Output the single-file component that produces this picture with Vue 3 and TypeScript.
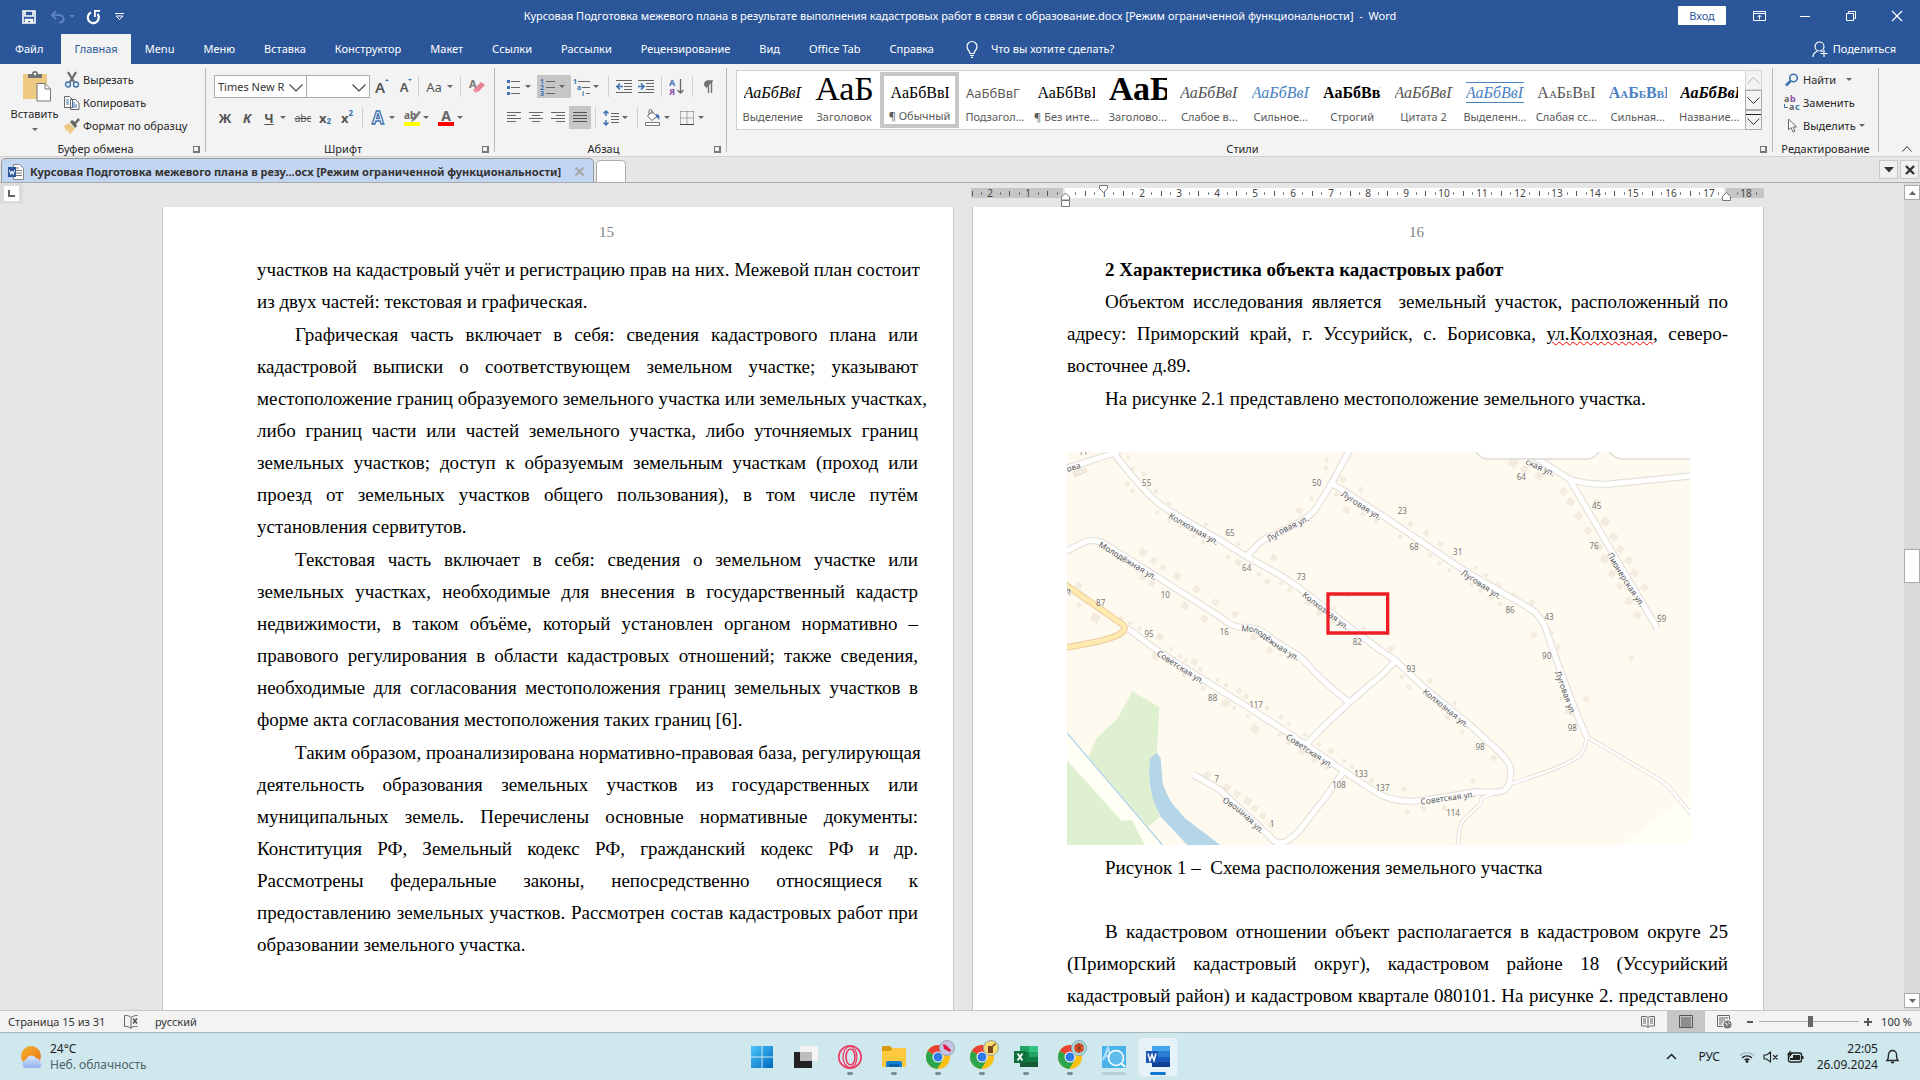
<script setup lang="ts">
interface Para { lines: string[]; flush?: boolean }
interface StyleItem { sample: string; name: string; kind: string; selected?: boolean }

const title = 'Курсовая Подготовка межевого плана в результате выполнения кадастровых работ в связи с образование.docx [Режим ограниченной функциональности]  -  Word'
const tabs = ['Файл', 'Главная', 'Menu', 'Меню', 'Вставка', 'Конструктор', 'Макет', 'Ссылки', 'Рассылки', 'Рецензирование', 'Вид', 'Office Tab', 'Справка']

const styleItems: StyleItem[] = [
  { sample: 'АаБбВвГ', name: 'Выделение', kind: 'italic' },
  { sample: 'АаБ', name: 'Заголовок', kind: 'huge' },
  { sample: 'АаБбВвГ', name: '¶ Обычный', kind: 'normal', selected: true },
  { sample: 'АаБбВвГ', name: 'Подзагол...', kind: 'subtitle' },
  { sample: 'АаБбВвГ', name: '¶ Без инте...', kind: 'normal' },
  { sample: 'АаБ', name: 'Заголово...', kind: 'huge heavy' },
  { sample: 'АаБбВвГ', name: 'Слабое в...', kind: 'italic grey' },
  { sample: 'АаБбВвГ', name: 'Сильное...', kind: 'italic azure' },
  { sample: 'АаБбВвГ', name: 'Строгий', kind: 'heavy' },
  { sample: 'АаБбВвГ', name: 'Цитата 2', kind: 'italic grey' },
  { sample: 'АаБбВвГ', name: 'Выделенн...', kind: 'italic azure ruled' },
  { sample: 'АаБбВвГ', name: 'Слабая сс...', kind: 'caps grey' },
  { sample: 'АаБбВвГ', name: 'Сильная...', kind: 'caps azure heavy' },
  { sample: 'АаБбВвГ', name: 'Название...', kind: 'italic heavy' },
]

const leftParas: Para[] = [
  { flush: true, lines: ['участков на кадастровый учёт и регистрацию прав на них. Межевой план состоит', 'из двух частей: текстовая и графическая.'] },
  { lines: [
    'Графическая часть включает в себя: сведения кадастрового плана или',
    'кадастровой выписки о соответствующем земельном участке; указывают',
    'местоположение границ образуемого земельного участка или земельных участках,',
    'либо границ части или частей земельного участка, либо уточняемых границ',
    'земельных участков; доступ к образуемым земельным участкам (проход или',
    'проезд от земельных участков общего пользования), в том числе путём',
    'установления сервитутов.'] },
  { lines: [
    'Текстовая часть включает в себя: сведения о земельном участке или',
    'земельных участках, необходимые для внесения в государственный кадастр',
    'недвижимости, в таком объёме, который установлен органом нормативно –',
    'правового регулирования в области кадастровых отношений; также сведения,',
    'необходимые для согласования местоположения границ земельных участков в',
    'форме акта согласования местоположения таких границ [6].'] },
  { lines: [
    'Таким образом, проанализирована нормативно-правовая база, регулирующая',
    'деятельность образования земельных участков из государственных или',
    'муниципальных земель. Перечислены основные нормативные документы:',
    'Конституция РФ, Земельный кодекс РФ, гражданский кодекс РФ и др.',
    'Рассмотрены федеральные законы, непосредственно относящиеся к',
    'предоставлению земельных участков. Рассмотрен состав кадастровых работ при',
    'образовании земельного участка.'] },
]

const closing = [
  'В кадастровом отношении объект располагается в кадастровом округе 25',
  '(Приморский кадастровый округ), кадастровом районе 18 (Уссурийский',
  'кадастровый район) и кадастровом квартале 080101. На рисунке 2. представлено',
]

/* Horizontal ruler: one centimetre is 37.8 px, zero sits 95 px from the page edge */
const CM = 37.8
const rulerNumbers = [-2, -1, ...Array.from({ length: 18 }, (_, i) => i + 1)].map(n => ({
  x: Math.round(95 + n * CM), label: String(Math.abs(n)),
}))
const rulerTicks: { x: number; h: number }[] = []
for (let q = -10; q <= 74; q++) {
  if (q % 4 === 0 || q === 70) continue
  const x = Math.round(95 + (q * CM) / 4)
  rulerTicks.push({ x, h: q % 2 === 0 ? 5 : 2 })
}

/* Map: street axes, house numbers and street names */
const streets = [
  'M20 85 L160 40 L180 30',
  'M155 30 C200 90 250 150 290 185 C320 212 340 218 480 300 L560 350 L660 405 L720 445 L880 570 L960 630 L1005 660 L1095 745 L1230 855 C1310 930 1352 960 1352 990 C1354 1050 1330 1057 1300 1057 L1250 1055 L1080 1082 C1020 1088 970 1075 930 1045 L850 992 L740 915 L570 805 L435 722 L290 630 L198 562',
  'M10 338 L75 305 Q110 295 140 315 L480 530 Q520 565 550 562 Q600 560 640 600 L720 650 C760 690 780 720 865 785',
  'M740 912 L790 860 L865 790 L940 725 Q980 695 1005 662',
  'M868 30 L815 130 L765 210 C740 240 700 255 640 285 C600 300 590 320 560 348',
  'M815 130 L965 225 L1210 390 L1400 500 C1430 515 1440 530 1455 560 L1500 690 L1550 820 L1580 890',
  'M1390 30 L1530 118 Q1580 135 1650 132 L1900 107',
  'M1530 120 L1650 325 L1792 565',
  'M398 1002 L480 1050 L630 1190 Q655 1222 685 1200 C720 1180 740 1140 790 1080 L850 995',
]
const lanes = [
  'M1580 890 Q1575 930 1560 945 C1520 980 1440 1000 1345 1035',
  'M1580 890 L1800 1020 Q1830 1040 1850 1070 L1900 1130',
  'M1300 1060 L1265 1075 L1262 1090 L1215 1135 Q1200 1150 1198 1170 L1192 1230',
]
const houseNumbers: [number, number, string][] = [
  [70, 38, '11'], [260, 129, '55'], [770, 129, '50'], [510, 280, '65'], [560, 384, '64'], [724, 411, '73'], [316, 465, '10'],
  [493, 578, '16'], [122, 489, '87'], [267, 582, '95'], [892, 607, '82'], [458, 776, '88'], [588, 796, '117'], [903, 1002, '133'],
  [837, 1037, '108'], [470, 1018, '7'], [637, 1152, '1'], [1384, 111, '64'], [1610, 198, '45'], [1602, 318, '76'], [1027, 214, '23'],
  [1062, 323, '68'], [1193, 336, '31'], [1350, 512, '86'], [1467, 531, '43'], [1460, 648, '90'], [1053, 688, '93'], [1537, 866, '98'],
  [1260, 921, '98'], [968, 1044, '137'], [1179, 1119, '114'], [1805, 537, '59'],
]
const streetNames: [string, string][] = [
  ['M8 92 L90 68', 'кова'],
  ['M328 226 L520 335', 'Колхозная ул.'],
  ['M118 312 L340 446', 'Молодёжная ул.'],
  ['M624 300 Q660 272 700 256 Q730 245 790 205', 'Луговая ул.'],
  ['M846 160 L1010 266', 'Луговая ул.'],
  ['M730 462 L900 592', 'Колхозная ул.'],
  ['M544 566 L580 568 Q600 574 640 610 L760 684', 'Молодёжная ул.'],
  ['M292 638 L480 758', 'Советская ул.'],
  ['M680 888 L860 1008', 'Советская ул.'],
  ['M490 1078 L540 1110 L660 1228', 'Овощная ул.'],
  ['M10 442 L90 500', 'ул.'],
  ['M1398 64 L1530 124', 'ская ул.'],
  ['M1648 340 Q1690 420 1780 540', 'Пионерская ул.'],
  ['M1206 396 L1370 504', 'Луговая ул.'],
  ['M1492 694 L1560 880', 'Луговая ул.'],
  ['M1092 752 L1270 896', 'Колхозная ул.'],
  ['M1082 1086 L1280 1058', 'Советская ул.'],
]
const houses: [number, number, number][] = [
  [205, 52, 9], [218, 86, 9], [252, 101, 12], [202, 132, 12], [218, 153, 9], [288, 154, 9], [327, 190, 10], [291, 217, 9], [328, 242, 9],
  [362, 258, 9], [438, 253, 9], [400, 288, 9], [429, 307, 10], [535, 311, 10], [504, 350, 10], [535, 367, 16], [641, 353, 16], [597, 403, 10],
  [622, 425, 12], [662, 430, 9], [688, 450, 12], [744, 488, 14], [778, 518, 14], [249, 338, 18], [281, 362, 15], [309, 381, 13], [247, 412, 14],
  [276, 431, 14], [351, 408, 16], [409, 447, 16], [375, 498, 18], [467, 487, 16], [433, 537, 16], [525, 523, 16], [581, 592, 16], [628, 631, 16],
  [57, 436, 15], [57, 495, 10], [106, 534, 22], [184, 534, 10], [211, 549, 9], [239, 565, 10], [299, 591, 18], [287, 648, 20], [334, 627, 9],
  [362, 649, 9], [403, 666, 15], [371, 705, 10], [378, 660, 9], [421, 688, 9], [473, 719, 9], [498, 735, 9], [429, 745, 10], [538, 753, 13],
  [558, 769, 13], [497, 790, 18], [523, 804, 9], [564, 828, 9], [622, 804, 9], [662, 831, 10], [585, 866, 20], [686, 852, 9], [735, 884, 10],
  [659, 885, 9], [686, 908, 12], [726, 936, 14], [777, 914, 9], [762, 962, 10], [813, 933, 14], [800, 986, 9], [852, 962, 9], [877, 980, 10],
  [935, 1022, 12], [442, 1005, 16], [500, 1042, 18], [530, 1062, 15], [563, 1083, 20], [584, 1105, 15], [609, 1126, 15], [632, 1155, 14],
  [800, 60, 10], [798, 83, 10], [848, 119, 14], [830, 164, 9], [860, 210, 16], [902, 148, 11], [718, 211, 16], [755, 176, 10], [908, 223, 10],
  [947, 243, 10], [910, 565, 9], [862, 466, 8], [824, 503, 8], [818, 545, 9], [1360, 68, 22], [1393, 87, 18], [1438, 108, 20], [1511, 154, 18],
  [1532, 186, 18], [1556, 228, 18], [1583, 273, 18], [1609, 190, 18], [1635, 245, 20], [1661, 290, 18], [1681, 328, 18], [1617, 320, 18],
  [1634, 357, 20], [1657, 401, 18], [1706, 361, 18], [1723, 399, 18], [1680, 438, 16], [1753, 442, 18], [1707, 484, 18], [1732, 525, 18],
  [1804, 530, 16], [1714, 655, 12], [1051, 253, 12], [1099, 278, 13], [1142, 312, 13], [1020, 290, 9], [1110, 347, 10], [1139, 370, 10],
  [1168, 391, 9], [1246, 384, 9], [1278, 406, 9], [1234, 434, 10], [1262, 453, 9], [1293, 474, 10], [1319, 492, 9], [1316, 435, 12],
  [1360, 466, 12], [1415, 488, 14], [1421, 586, 14], [1472, 579, 13], [1494, 622, 12], [1505, 775, 10], [1521, 816, 11], [1579, 778, 14],
  [992, 625, 14], [1025, 710, 10], [1047, 742, 11], [1110, 724, 12], [1163, 829, 14], [1207, 877, 9], [1301, 954, 14], [1239, 1023, 12],
  [1032, 1047, 12], [1042, 1115, 12], [1089, 1107, 10], [1153, 1104, 12], [1184, 790, 9],
]
</script>

<template>
  <div class="app">
    <header class="band">
      <div class="titlebar">
        <div class="qat">
          <button class="q" aria-label="Сохранить"><svg width="14" height="14" viewBox="0 0 14 14"><path d="M1 1h12v12h-12zM3 1v5h8V1M3.500 13V9.500h7V13" fill="none" stroke="#fff" stroke-width="1.6" /><path d="M4 9h6v4H8v-2H6v2H4z" fill="#fff" /></svg></button>
          <button class="q wide" aria-label="Отменить"><svg width="26" height="14" viewBox="0 0 26 14"><path d="M2 5h7c3 0 4.500 2 4.500 4S12 12.500 9 12.500M6 1L2 5l4 4" fill="none" stroke="#5c82bd" stroke-width="2" /><path d="M19 5h6l-3 3z" fill="#5c82bd" /></svg></button>
          <button class="q" aria-label="Повторить"><svg width="15" height="15" viewBox="0 0 15 15"><path d="M5 2.500A5.500 5.500 0 1 0 11.500 4" fill="none" stroke="#fff" stroke-width="2.2" /><path d="M8 0h6v1.800h-4.200V7H8z" fill="#fff" /></svg></button>
          <button class="q" aria-label="Настройка"><svg width="9" height="8" viewBox="0 0 9 8"><path d="M0 .5h9M1 3l3.500 3.500L8 3z" fill="none" stroke="#fff" /></svg></button>
        </div>
        <div class="doc-title">{{ title }}</div>
        <div class="winbtns">
          <button class="signin">Вход</button>
          <button aria-label="Параметры ленты"><svg width="13" height="10" viewBox="0 0 13 10"><path d="M.5.5h12v9H.5zM.5 2.500h12M6.500 8.500V4.500M4.500 6l2-2 2 2" fill="none" stroke="#fff" /></svg></button>
          <button aria-label="Свернуть"><svg width="10" height="10" viewBox="0 0 10 10"><path d="M0 5.500h10" stroke="#fff" /></svg></button>
          <button aria-label="Восстановить"><svg width="10" height="10" viewBox="0 0 10 10"><path d="M.5 2.500h7v7h-7zM2.500 2.500v-2h7v7h-2" fill="none" stroke="#fff" /></svg></button>
          <button aria-label="Закрыть"><svg width="10" height="10" viewBox="0 0 10 10"><path d="M0 0l10 10M10 0L0 10" stroke="#fff" stroke-width="1.2" /></svg></button>
        </div>
      </div>
      <nav class="tabs">
        <button v-for="t in tabs" :key="t" class="tab" :class="{ active: t === 'Главная', file: t === 'Файл' }">{{ t }}</button>
        <button class="tellme"><svg width="12" height="17" viewBox="0 0 12 17"><path d="M4 12.500C4 10 1 9 1 5.500a5 5 0 0 1 10 0C11 9 8 10 8 12.500zM4 14.500h4M5 16.300h2" fill="none" stroke="#fff" stroke-width="1.2" /></svg>Что вы хотите сделать?</button>
        <button class="share"><svg width="16" height="17" viewBox="0 0 16 17"><circle cx="7.500" cy="5.500" r="4.500" fill="none" stroke="#fff" stroke-width="1.200" /><path d="M1 16c0-3 2-5 4.500-6M9 9.700l1.500 1M12 9v7M8.500 12.500h7" fill="none" stroke="#fff" stroke-width="1.200" /></svg>Поделиться</button>
      </nav>
    </header>

    <section class="ribbon">
      <div class="group clip">
        <div class="clip-body">
          <button class="paste">
            <svg width="30" height="31" viewBox="0 0 30 31"><path d="M1 3h24v25H1z" fill="#eec981" /><path d="M6 7V3h4a3 3 0 0 1 6 0h4v4z" fill="#737373" /><circle cx="13" cy="3" r="1.200" fill="#fff" /><path d="M15 12.500h8l5.500 5.500v12H15z" fill="#fff" stroke="#777" /><path d="M23 12.500V18h5.500" fill="none" stroke="#777" /></svg>
            <span>Вставить</span><i class="caret"></i>
          </button>
          <div class="cmds">
            <button><svg width="16" height="16" viewBox="0 0 16 16"><path d="M4 0l6 10M12 0L6 10" stroke="#6a6a6a" stroke-width="2.200" /><circle cx="4" cy="12.500" r="2.500" fill="none" stroke="#3f74b0" stroke-width="1.400" /><circle cx="12" cy="12.500" r="2.500" fill="none" stroke="#3f74b0" stroke-width="1.400" /></svg>Вырезать</button>
            <button><svg width="16" height="16" viewBox="0 0 16 16"><path d="M.5 1.500h5l3 3v8h-8zM6.500 4.500h5l3.500 3.500v6.500H6.500z" fill="#fff" stroke="#666" /><path d="M2 5h3M2 7h3M2 9h3M8 8h3M8 10h5M8 12h5" stroke="#3f74b0" /></svg>Копировать</button>
            <button><svg width="16" height="16" viewBox="0 0 16 16"><path d="M0 8l5-3 6 6-5 5-2-2 1-2-3 1z" fill="#eec981" /><path d="M6 4l2-2 3 2 3-4 2 2-4 4 1 2-2 2z" fill="#666" /></svg>Формат по образцу</button>
          </div>
        </div>
        <div class="glabel">Буфер обмена<i class="launch"></i></div>
      </div>

      <div class="group font">
        <div class="row">
          <label class="combo face"><select aria-label="Шрифт"><option>Times New R</option></select><svg width="14" height="8" viewBox="0 0 14 8"><path d="M.5.5L7 7 13.500.5" fill="none" stroke="#444" stroke-width="1.200" /></svg></label>
          <label class="combo size"><select aria-label="Размер шрифта"><option></option></select><svg width="14" height="8" viewBox="0 0 14 8"><path d="M.5.5L7 7 13.500.5" fill="none" stroke="#444" stroke-width="1.200" /></svg></label>
          <button class="b24 grow">А<i class="up"></i></button>
          <button class="b24 shrink">А<i class="down"></i></button>
          <i class="sep tight"></i>
          <button class="aa">Aa<i class="caret"></i></button>
          <i class="sep tight"></i>
          <button class="b32" aria-label="Очистить форматирование"><svg width="15" height="15" viewBox="0 0 15 15"><text x="-1" y="9" font-size="11" font-weight="700" fill="#777">A</text><path d="M4 10l7-7 4 3-7 7zM3 11l3 3 1-1-3-3z" fill="#e78295" /></svg></button>
        </div>
        <div class="row">
          <button class="b heavy">Ж</button>
          <button class="b heavy slant">К</button>
          <button class="b split heavy"><u>Ч</u><i class="caret"></i></button>
          <button class="b small"><s>abc</s></button>
          <button class="b heavy">x<sub>2</sub></button>
          <button class="b heavy">x<sup>2</sup></button>
          <i class="sep"></i>
          <button class="b split" aria-label="Текстовые эффекты"><svg width="22" height="20" viewBox="0 0 22 20"><text x="11" y="16" text-anchor="middle" font-size="17" font-weight="700" fill="#fff" stroke="#3f74b0" stroke-width="1.300">A</text></svg><i class="caret"></i></button>
          <button class="b split" aria-label="Цвет выделения"><svg width="22" height="20" viewBox="0 0 22 20"><text x="3" y="11" font-size="10" font-weight="700" fill="#666">ab</text><path d="M18 3l2 1-6 8-4 2 2-4z" fill="#777" /><path d="M3 14h16v4H3z" fill="#ff0" /></svg><i class="caret"></i></button>
          <button class="b split" aria-label="Цвет текста"><svg width="22" height="20" viewBox="0 0 22 20"><text x="11" y="13" text-anchor="middle" font-size="14" font-weight="700" fill="#666">A</text><path d="M3 14h16v4H3z" fill="#f00" /></svg><i class="caret"></i></button>
        </div>
        <div class="glabel">Шрифт<i class="launch"></i></div>
      </div>

      <div class="group para">
        <div class="row">
          <button class="b split" aria-label="Маркеры"><svg width="16" height="16" viewBox="0 0 16 16"><path d="M5 2.500h9M5 8.500h9M5 14.500h9" stroke="#666" /><path d="M1 1h3v3H1zM1 7h3v3H1zM1 13h3v3H1z" fill="#3f74b0" /></svg><i class="caret"></i></button>
          <button class="b split on" aria-label="Нумерация"><svg width="16" height="18" viewBox="0 0 16 18"><path d="M6 3.500h9M6 9.500h9M6 15.500h9" stroke="#666" /><g font-size="7" font-weight="700" fill="#3f74b0"><text x="0" y="6">1</text><text x="0" y="12">2</text><text x="0" y="18">3</text></g></svg><i class="caret"></i></button>
          <button class="b split" aria-label="Многоуровневый список"><svg width="18" height="18" viewBox="0 0 18 18"><path d="M5 3.500h12M9 9.500h8M13 15.500h4" stroke="#666" /><g font-size="7" font-weight="700" fill="#3f74b0"><text x="0" y="6">1</text><text x="4" y="12">a</text><text x="9" y="18">i</text></g></svg><i class="caret"></i></button>
          <i class="sep first"></i>
          <button class="b" aria-label="Уменьшить отступ"><svg width="16" height="14" viewBox="0 0 16 14"><path d="M0 .5h16M8 3.500h8M8 6.500h8M8 9.500h8M0 12.500h16" stroke="#666" /><path d="M1 6.500h6M4 3.500l-3 3 3 3" fill="none" stroke="#3f74b0" stroke-width="1.700" /></svg></button>
          <button class="b" aria-label="Увеличить отступ"><svg width="16" height="14" viewBox="0 0 16 14"><path d="M0 .5h16M8 3.500h8M8 6.500h8M8 9.500h8M0 12.500h16" stroke="#666" /><path d="M0 6.500h6M3 3.500l3 3-3 3" fill="none" stroke="#3f74b0" stroke-width="1.700" /></svg></button>
          <i class="sep"></i>
          <button class="b" aria-label="Сортировка"><svg width="16" height="18" viewBox="0 0 16 18"><g font-size="9" font-weight="700"><text x="0" y="8" fill="#3f74b0">А</text><text x="0" y="17" fill="#8b4fa8">Я</text></g><path d="M11.500 1v14M8.500 12l3 3 3-3" fill="none" stroke="#666" stroke-width="1.300" /></svg></button>
          <i class="sep"></i>
          <button class="b" aria-label="Все знаки"><svg width="12" height="14" viewBox="0 0 12 14"><path d="M5 7.500A3.500 3.500 0 0 1 5 .8h6" fill="#737373" stroke="#737373" /><path d="M6.500 1v12M9.500 1v12" stroke="#737373" stroke-width="1.400" /></svg></button>
        </div>
        <div class="row">
          <button class="b" aria-label="По левому краю"><svg width="14" height="12" viewBox="0 0 14 12"><path d="M0 .5h14M0 3.500h9M0 6.500h14M0 9.500h9" stroke="#666" /></svg></button>
          <button class="b" aria-label="По центру"><svg width="14" height="12" viewBox="0 0 14 12"><path d="M0 .5h14M3 3.500h8M0 6.500h14M3 9.500h8" stroke="#666" /></svg></button>
          <button class="b" aria-label="По правому краю"><svg width="14" height="12" viewBox="0 0 14 12"><path d="M0 .5h14M5 3.500h9M0 6.500h14M5 9.500h9" stroke="#666" /></svg></button>
          <button class="b on" aria-label="По ширине"><svg width="14" height="12" viewBox="0 0 14 12"><path d="M0 .5h14M0 3.500h14M0 6.500h14M0 9.500h14" stroke="#555" /></svg></button>
          <i class="sep"></i>
          <button class="b split" aria-label="Интервал"><svg width="16" height="16" viewBox="0 0 16 16"><path d="M3 1v5M.5 3.500L3 1l2.500 2.500M3 15v-5M.5 12.500L3 15l2.500-2.500" fill="none" stroke="#3f74b0" stroke-width="1.500" /><path d="M8 3.500h8M8 6.500h8M8 9.500h8M8 12.500h8" stroke="#666" /></svg><i class="caret"></i></button>
          <i class="sep first"></i>
          <button class="b split" aria-label="Заливка"><svg width="18" height="17" viewBox="0 0 18 17"><path d="M8 2.500l5 5-5 4-4.500-4.500zM5 6V2a1.500 1.500 0 0 1 3 0v3" fill="#fff" stroke="#666" /><path d="M12 5c4 0 4 4 3 6-1-2-2-3-3-3z" fill="#3f74b0" /><path d="M1.500 13.500h14v3h-14z" fill="#fff" stroke="#777" /></svg><i class="caret"></i></button>
          <button class="b split" aria-label="Границы"><svg width="14" height="14" viewBox="0 0 14 14"><path d="M.5.5h13M.5.5v13M13.500.5v13M7 .5v13M.5 7h13" stroke="#666" stroke-dasharray="1 1" /><path d="M0 13.500h14" stroke="#444" /></svg><i class="caret"></i></button>
        </div>
        <div class="glabel">Абзац<i class="launch"></i></div>
      </div>

      <div class="group styles">
        <div class="gallery">
          <button v-for="s in styleItems" :key="s.name" class="style" :class="{ selected: s.selected }">
            <span class="sample" :class="s.kind">{{ s.sample }}</span><span class="sname">{{ s.name }}</span>
          </button>
          <div class="gscroll">
            <button class="dim" aria-label="Вверх"><svg width="13" height="7" viewBox="0 0 13 7"><path d="M.5 6.500l6-6 6 6" fill="none" stroke="#b5b5b5" /></svg></button>
            <button aria-label="Вниз"><svg width="13" height="7" viewBox="0 0 13 7"><path d="M.5.5l6 6 6-6" fill="none" stroke="#333" /></svg></button>
            <button aria-label="Ещё"><svg width="15" height="12" viewBox="0 0 15 12"><path d="M0 .5h15" stroke="#222" /><path d="M1.500 4.500l6 6 6-6" fill="none" stroke="#333" /></svg></button>
          </div>
        </div>
        <div class="glabel">Стили<i class="launch"></i></div>
      </div>

      <div class="group edit">
        <div class="cmds">
          <button><svg width="14" height="14" viewBox="0 0 14 14"><circle cx="8.500" cy="5" r="3.800" fill="none" stroke="#3f74b0" stroke-width="1.600" /><path d="M5.500 8L1 12.500" stroke="#3f74b0" stroke-width="2.600" /></svg>Найти<i class="caret far"></i></button>
          <button><svg width="16" height="16" viewBox="0 0 16 16"><g font-size="9" font-weight="700"><text x="0" y="7" fill="#666">a</text><text x="6" y="7" fill="#8b4fa8">b</text><text x="5" y="15" fill="#666">a</text><text x="11" y="15" fill="#3f74b0">c</text></g><path d="M.5 9v3.500h3.500" fill="none" stroke="#3f74b0" /></svg>Заменить</button>
          <button><svg width="12" height="15" viewBox="0 0 12 15"><path d="M2.500 1v11l2.500-2.500 2 4.500 2-1-2-4h3.500z" fill="#fff" stroke="#666" /></svg>Выделить<i class="caret"></i></button>
        </div>
        <div class="glabel">Редактирование</div>
      </div>
      <div class="ribbon-end">
        <button aria-label="Свернуть ленту"><svg width="10" height="6" viewBox="0 0 10 6"><path d="M.5 5.500l4.500-5 4.500 5" fill="none" stroke="#333" /></svg></button>
      </div>
    </section>

    <div class="doctabs">
      <a class="doctab" href="#doc"><svg width="16" height="16" viewBox="0 0 16 16"><path d="M5.500.5h6l4 4v11h-10z" fill="#fff" stroke="#888" /><path d="M8 4h3M8 6.500h6M8 9h6M8 11.500h6" stroke="#777" /><path d="M0 3h8v10H0z" fill="#2b579a" /><path d="M1.500 6l1.200 4.500L4 7l1.300 3.500L6.500 6" fill="none" stroke="#fff" /></svg><b>Курсовая Подготовка межевого плана в резу...осх [Режим ограниченной функциональности]</b><svg width="9" height="9" viewBox="0 0 9 9"><path d="M.5.5l8 8M8.500.5l-8 8" stroke="#a6a6a6" stroke-width="2" /></svg></a>
      <button class="newtab" aria-label="Новая вкладка"></button>
      <div class="tabctl">
        <button aria-label="Список вкладок"><svg width="10" height="6" viewBox="0 0 10 6"><path d="M0 0h10L5 5.500z" fill="#333" /></svg></button>
        <button aria-label="Закрыть вкладку"><svg width="10" height="10" viewBox="0 0 10 10"><path d="M1 1l8 8M9 1L1 9" stroke="#333" stroke-width="2.400" /></svg></button>
      </div>
    </div>

    <div class="workspace">
      <div class="canvas">
        <div class="rulerrow">
          <div class="corner"><svg width="15" height="15" viewBox="0 0 15 15"><path d="M5 4v6h6" fill="none" stroke="#666" stroke-width="2" /></svg></div>
          <div class="rulerpages">
            <div class="nopage"></div>
            <svg class="ruler" width="794" height="24" viewBox="0 0 794 24">
              <path d="M0 5h92v10H0zM755 5h38v10h-38z" fill="#c6c6c6" />
              <path d="M94 5h659v10H94z" fill="#fff" />
              <path v-for="t in rulerTicks" :key="t.x" :d="`M${t.x + 0.5} ${10.5 - t.h / 2}v${t.h}`" stroke="#555" />
              <text v-for="n in rulerNumbers" :key="n.x" :x="n.x" y="14" text-anchor="middle" font-size="10" fill="#444">{{ n.label }}</text>
              <path d="M128.500 2.500h8v3l-4 4-4-4z" fill="#fff" stroke="#777" />
              <path d="M90.500 17v-3l4-4 4 4v3zM90.500 17.500h8v6h-8z" fill="#fff" stroke="#777" />
              <path d="M751.500 17.500v-4l4-4 4 4v4z" fill="#fff" stroke="#777" />
            </svg>
          </div>
        </div>
        <main class="pages">
          <article class="page">
            <div class="pnum">15</div>
            <p v-for="(p, i) in leftParas" :key="i" :class="{ flush: p.flush }">
              <span v-for="l in p.lines" :key="l" class="line">{{ l }}</span>
            </p>
          </article>
          <article class="page">
            <div class="pnum">16</div>
            <h1>2 Характеристика объекта кадастровых работ</h1>
            <p>
              <span class="line">Объектом исследования является&nbsp; земельный участок, расположенный по</span>
              <span class="line">адресу: Приморский край, г. Уссурийск, с. Борисовка, <span class="typo">ул.Колхозная</span>, северо-</span>
              <span class="line">восточнее д.89.</span>
            </p>
            <p><span class="line">На рисунке 2.1 представлено местоположение земельного участка.</span></p>
            <svg class="map" viewBox="21 36 1869 1179" role="img" aria-label="Схема расположения">
              <path d="M21 36h1869v1179H21z" fill="#fefaf0" />
              <path d="M1680 1218L1890 1060V1218z" fill="#fffff6" />
              <path d="M20 880V960L185 1142 215 1140 257 1218H310z" fill="#fffff6" />
              <path d="M217 753L298 802 291 940 270 955 268 1040 300 1130 265 1160 85 950 110 895 172 836zM20 960L185 1142 215 1140 257 1218H20z" fill="#dff0d0" />
              <path d="M270 955L291 938 302 955 308 1030Q325 1080 345 1100L375 1135 485 1218H385Q340 1170 302 1130 268 1070 267 1000z" fill="#b5d6e8" />
              <path d="M20 878L310 1218" stroke="#b0d3e6" stroke-width="4" />
              <rect v-for="(h, i) in houses" :key="'h' + i" :x="h[0] - h[2] / 2" :y="h[1] - h[2] / 2" :width="h[2]" :height="h[2]" :transform="`rotate(30 ${h[0]} ${h[1]})`" fill="#f3ecdf" stroke="#e6ddd1" stroke-width="1" />
              <path d="M40 97L76 84 81 95 45 110z" fill="#f3ebdf" stroke="#ddd3c8" stroke-width="2" />
              <g fill="none" stroke-linejoin="round">
                <path v-for="d in lanes" :key="d" :d="d" stroke="#e6e0d9" stroke-width="13" />
                <path v-for="d in streets" :key="d" :d="d" stroke="#e6e0db" stroke-width="22" />
                <path v-for="d in lanes" :key="'i' + d" :d="d" stroke="#fff" stroke-width="7" />
                <path v-for="d in streets" :key="'i' + d" :d="d" stroke="#fff" stroke-width="15" />
                <path d="M10 430L190 555Q200 570 180 582C140 602 100 608 10 624" stroke="#ecc9a0" stroke-width="20" />
                <path d="M10 430L190 555Q200 570 180 582C140 602 100 608 10 624" stroke="#ffebb0" stroke-width="14" />
              </g>
              <g font-size="24" fill="#777" text-anchor="middle">
                <text v-for="(n, i) in houseNumbers" :key="'n' + i" :x="n[0]" :y="n[1] + 8">{{ n[2] }}</text>
              </g>
              <g font-size="25" fill="#555" stroke="#fff" stroke-width="3" paint-order="stroke">
                <template v-for="(s, i) in streetNames" :key="'s' + i">
                  <path :id="'street' + i" :d="s[0]" fill="none" stroke="none" />
                  <text dy="8"><textPath :href="'#street' + i">{{ s[1] }}</textPath></text>
                </template>
              </g>
              <path d="M1245 30Q1260 57 1285 57H1580Q1605 57 1620 30zM1645 30Q1660 57 1690 57H1900V30z" fill="#fff" stroke="#dedad4" stroke-width="4" />
              <path d="M804 462h179v117H804z" fill="none" stroke="#ee1c25" stroke-width="10" />
            </svg>
            <p class="caption"><span class="line">Рисунок 1 –&nbsp; Схема расположения земельного участка</span></p>
            <p class="open"><span v-for="l in closing" :key="l" class="line">{{ l }}</span></p>
          </article>
        </main>
      </div>
      <div class="vscroll">
        <button aria-label="Прокрутить вверх"><svg width="7" height="4" viewBox="0 0 7 4"><path d="M0 4h7L3.500 0z" fill="#666" /></svg></button>
        <div class="track before"></div>
        <div class="thumb"></div>
        <div class="track after"></div>
        <button aria-label="Прокрутить вниз"><svg width="7" height="4" viewBox="0 0 7 4"><path d="M0 0h7L3.500 4z" fill="#666" /></svg></button>
      </div>
    </div>

    <footer class="status">
      <span class="pages-count">Страница 15 из 31</span>
      <svg width="15" height="14" viewBox="0 0 15 14"><path d="M7 2.500C5 .5 3 .5.500.5v11c2.500 0 4.500 0 6.500 2V2.500C8 1.500 10 .5 13.500.5M7 12.500c2-1 4-1 6.500-1" fill="none" stroke="#666" /><path d="M9 3.500l4 5M13 3.500l-4 5" stroke="#555" stroke-width="1.600" /></svg>
      <span class="lang">русский</span>
      <div class="views">
        <button aria-label="Режим чтения"><svg width="14" height="14" viewBox="0 0 14 14"><path d="M7 2.500L5.500 1.500H.5v9.500h5L7 12.500l1.500-1.500h5V1.500h-5zM7 2v11M2 4h3M2 6h3M2 8h3M9 4h3M9 6h3M9 8h3" fill="none" stroke="#666" /></svg></button>
        <button class="on" aria-label="Разметка страницы"><svg width="14" height="13" viewBox="0 0 14 13"><path d="M.5.5h13v12H.5zM2 3h10M2 5h10M2 7h10M2 9h10M2 11h10" fill="none" stroke="#555" /></svg></button>
        <button aria-label="Веб-документ"><svg width="15" height="14" viewBox="0 0 15 14"><path d="M6 11.500H.5V.5h12v4M2 3h9M2 5h6M2 7h4M2 9h3" fill="none" stroke="#666" /><circle cx="10.500" cy="9.500" r="4" fill="#777" /><path d="M8 8l2 1 0 2M11 7l2 2" stroke="#eee" fill="none" /></svg></button>
      </div>
      <button class="zoom" aria-label="Уменьшить"><svg width="6" height="8" viewBox="0 0 6 8"><path d="M0 4h6" stroke="#555" stroke-width="2" /></svg></button>
      <input class="slider" type="range" min="10" max="190" value="102" aria-label="Масштаб">
      <button class="zoom" aria-label="Увеличить"><svg width="8" height="8" viewBox="0 0 8 8"><path d="M0 4h8M4 0v8" stroke="#555" stroke-width="2" /></svg></button>
      <span class="percent">100 %</span>
    </footer>

    <footer class="taskbar">
      <div class="weather">
        <svg width="24" height="24" viewBox="0 0 24 24"><defs><linearGradient id="sun" x1="0" y1="0" x2="1" y2="1"><stop offset="0" stop-color="#f2b42e" /><stop offset="1" stop-color="#ee6f12" /></linearGradient><linearGradient id="cloud" x1="0" y1="0" x2="0" y2="1"><stop offset="0" stop-color="#dbe6fb" /><stop offset="1" stop-color="#92b2ee" /></linearGradient></defs><circle cx="11" cy="11" r="10" fill="url(#sun)" /><path d="M7 23a4 4 0 0 1-1-8 5.500 5.500 0 0 1 10-2 4.500 4.500 0 0 1 4 4.500 3 3 0 0 1-1 5.500z" fill="url(#cloud)" /></svg>
        <div><div>24°C</div><div class="sub">Неб. облачность</div></div>
      </div>
      <div class="dock">
        <button aria-label="Пуск"><svg width="24" height="24" viewBox="0 0 24 24"><defs><linearGradient id="win" x1="0" y1="0" x2="1" y2="1"><stop offset="0" stop-color="#4cc8f8" /><stop offset="1" stop-color="#0067c0" /></linearGradient></defs><path d="M1 1h10.500v10.500H1zM12.500 1H23v10.500H12.500zM1 12.500h10.500V23H1zM12.500 12.500H23V23H12.500z" fill="url(#win)" /></svg></button>
        <button aria-label="Представление задач"><svg width="24" height="24" viewBox="0 0 24 24"><path d="M0 7h18v16H0z" fill="#222" /><path d="M6 1h18v15H6z" fill="#f4f4f4" /><path d="M6 7h12v9H6z" fill="#bdbdbd" /></svg></button>
        <button class="run" aria-label="Opera"><svg width="24" height="24" viewBox="0 0 24 24"><g fill="none" stroke="#ee3760"><circle cx="12" cy="12" r="11.200" stroke-width="1.600" /><ellipse cx="12" cy="12" rx="7" ry="10.500" stroke-width="1.200" /><ellipse cx="12.500" cy="12" rx="4.500" ry="8" stroke-width="1.600" /></g></svg></button>
        <button class="run" aria-label="Проводник"><svg width="24" height="24" viewBox="0 0 24 24"><path d="M0 2q0-1 1-1h7l2 2v4H0z" fill="#d99a06" /><path d="M0 6h8l3-3h12q1 0 1 1v18H0z" fill="#fdca3f" /><path d="M4 22v-4q0-2 2-2h12q2 0 2 2v4z" fill="#0f7fd0" /><path d="M7 19h10v3H7z" fill="#0a5fa5" /></svg></button>
        <button v-for="c in [1, 2]" :key="c" class="run" aria-label="Chrome"><svg width="30" height="30" viewBox="0 0 30 30"><circle cx="13" cy="17" r="12" fill="#fbc116" /><path d="M13 17L2.600 11A12 12 0 0 1 23.400 11z" fill="#ea4335" /><path d="M13 17L2.600 11A12 12 0 0 0 12 29l6-9z" fill="#2da44e" /><circle cx="13" cy="17" r="5.500" fill="#fff" /><circle cx="13" cy="17" r="4.500" fill="#2f7bea" /><circle cx="22" cy="8" r="7.500" :fill="c === 1 ? '#c6c5e6' : '#f6df70'" stroke="#96a5ac" /><path v-if="c === 1" d="M18 4l3 1 5 5-1 2-6-3z" fill="#e2193f" /><path v-else d="M19 6h4l3-3 1 1-3 3v6h-5z" fill="#7a421e" /></svg></button>
        <button class="run" aria-label="Excel"><svg width="24" height="24" viewBox="0 0 24 24"><path d="M6 1h9v6H6z" fill="#21a366" /><path d="M15 1h9v6h-9z" fill="#33c481" /><path d="M6 7h9v5H6z" fill="#107c41" /><path d="M15 7h9v5h-9z" fill="#21a366" /><path d="M6 12h18v5H6z" fill="#107c41" /><path d="M6 17h18v5H6z" fill="#185c37" /><path d="M0 6h12v12H0z" fill="#0f703b" /><path d="M3.500 8.500l5 7M8.500 8.500l-5 7" stroke="#fff" stroke-width="1.800" /></svg></button>
        <button class="run" aria-label="Chrome"><svg width="30" height="30" viewBox="0 0 30 30"><circle cx="13" cy="17" r="12" fill="#fbc116" /><path d="M13 17L2.600 11A12 12 0 0 1 23.400 11z" fill="#ea4335" /><path d="M13 17L2.600 11A12 12 0 0 0 12 29l6-9z" fill="#2da44e" /><circle cx="13" cy="17" r="5.500" fill="#fff" /><circle cx="13" cy="17" r="4.500" fill="#2f7bea" /><circle cx="22" cy="8" r="7.500" fill="#a3dee8" stroke="#8fa5ac" /><circle cx="22" cy="8" r="5" fill="#e2582a" /><path d="M18 5l8 6M22 3v10M18 11l8-6" stroke="#6b2413" stroke-width=".7" /></svg></button>
        <button class="run faint" aria-label="Поиск"><svg width="24" height="24" viewBox="0 0 24 24"><path d="M0 1h24v22H0z" fill="#4ab4ea" /><path d="M1 15L6 3l4 12M3 11h6" fill="none" stroke="#a9dcf5" stroke-width="2.400" /><circle cx="14" cy="13" r="7.500" fill="#5fbdee" stroke="#fff" stroke-width="1.600" /><path d="M19 18l4 4" stroke="#fff" stroke-width="2" /></svg></button>
        <button class="run current" aria-label="Word"><svg width="24" height="24" viewBox="0 0 24 24"><path d="M6 1h18v5H6z" fill="#41a5ee" /><path d="M6 6h18v6H6z" fill="#2b7cd3" /><path d="M6 12h18v5H6z" fill="#185abd" /><path d="M6 17h18v5H6z" fill="#103f91" /><path d="M0 6h12v12H0z" fill="#1a55b5" /><path d="M2 8.500l2 7 2-6 2 6 2-7" fill="none" stroke="#fff" stroke-width="1.500" /></svg></button>
      </div>
      <div class="tray">
        <button aria-label="Скрытые значки"><svg width="11" height="7" viewBox="0 0 11 7"><path d="M1 6l4.500-4.500L10 6" fill="none" stroke="#222" stroke-width="1.500" /></svg></button>
        <span class="kbd">РУС</span>
        <svg width="16" height="12" viewBox="0 0 16 12"><g fill="none"><path d="M1 4.500a10 10 0 0 1 14 0" stroke="#9bb" stroke-width="1.200" /><path d="M3 7a7 7 0 0 1 10 0M5.500 9a4 4 0 0 1 5 0" stroke="#222" stroke-width="1.300" /></g><circle cx="8" cy="10.500" r="1.400" fill="#222" /></svg>
        <svg width="16" height="12" viewBox="0 0 16 12"><path d="M1 4h2.500L7.500 1v10L3.500 8H1zM10 4l4.500 4.500M14.500 4L10 8.500" fill="none" stroke="#222" stroke-width="1.100" /></svg>
        <svg width="17" height="13" viewBox="0 0 17 13"><rect x="1.500" y="3" width="13" height="9" rx="2" fill="none" stroke="#222" stroke-width="1.400" /><path d="M6 5h7v5H3V8h3zM15 6h1.500v3H15z" fill="#222" /><path d="M3.500 0L0 5h2.500L2 8l4-5H3.500z" fill="#222" /></svg>
        <div class="clock"><div>22:05</div><div>26.09.2024</div></div>
        <svg width="13" height="15" viewBox="0 0 13 15"><path d="M1 11.500c1-1 1.500-2 1.500-6a4 4 0 0 1 8 0c0 4 .5 5 1.500 6zM5 13.500h3" fill="none" stroke="#222" stroke-width="1.300" /></svg>
      </div>
    </footer>
  </div>
</template>

<style>
body { margin: 0; overflow: hidden; }
</style>

<style scoped>
.app { display: flex; flex-direction: column; height: 100vh; font-family: "Noto Sans", "Open Sans", sans-serif; font-size: 11px; line-height: 16px; color: #262626; background: #e6e6e6; }
.app * { box-sizing: border-box; }
button { font: inherit; color: inherit; border: 0; padding: 0; margin: 0; background: none; display: flex; align-items: center; justify-content: center; white-space: nowrap; }
svg { display: block; flex: none; overflow: visible; }
svg.map, svg.ruler { overflow: hidden; }

.band { background: #2b579a; color: #fff; flex: none; }
.titlebar { display: grid; grid-template-columns: 1fr auto 1fr; height: 34px; align-items: center; }
.qat { display: flex; align-items: center; gap: 14px; padding-left: 22px; }
.qat .wide { margin-right: -4px; }
.doc-title { white-space: pre; padding-bottom: 2px; }
.winbtns { display: flex; justify-content: flex-end; align-items: center; align-self: start; height: 31px; }
.winbtns button { width: 46px; height: 30px; }
.winbtns .signin { width: 48px; height: 19px; background: #fff; color: #2b579a; margin-right: 10px; border-radius: 1px; }
.tabs { display: flex; height: 30px; }
.tab { padding: 0 15px 0 14px; }
.tab.file { padding: 0 18px 0 15px; }
.tab.active { background: #f3f3f3; color: #2b579a; padding: 0 13px; }
.tellme { gap: 13px; margin-left: 17px; }
.share { gap: 5px; margin-left: auto; padding-right: 24px; }

.ribbon { display: flex; flex: none; height: 93px; background: #f3f3f3; border-bottom: 1px solid #d2d0d0; }
.group { position: relative; flex: none; height: 84px; margin-top: 4px; padding-top: 7px; border-right: 1px solid #b8b8b8; display: flex; flex-direction: column; }
.clip { width: 206px; padding-top: 0; }
.font { width: 289px; padding-left: 8px; }
.para { width: 232px; padding-left: 8px; }
.styles { flex: 1; min-width: 0; padding: 2px 10px 0 9px; }
.edit { width: 106px; padding: 0 0 0 10px; }
.row { display: flex; height: 23px; margin-bottom: 8px; color: #555; }
.glabel { position: absolute; left: 0; right: 0; bottom: -5px; text-align: center; padding-right: 14px; line-height: 16px; }
.edit .glabel { padding-right: 0; }
.launch { position: absolute; right: 5px; bottom: 4px; width: 7px; height: 7px; border-left: 1px solid #777; border-top: 1px solid #777; }
.launch::after { content: ""; position: absolute; right: 0; bottom: 0; width: 4px; height: 4px; border-right: 2px solid #777; border-bottom: 2px solid #777; }
.caret { width: 0; height: 0; border: 3px solid transparent; border-top-color: #666; border-bottom: 0; flex: none; }
.clip-body { display: flex; }
.paste { flex-direction: column; width: 60px; justify-content: flex-start; padding: 3px 0 0 9px; }
.paste span { margin: 3px 0 6px; line-height: 17px; }
.paste svg { margin-left: 4px; }
.cmds { display: flex; flex-direction: column; }
.cmds button { height: 23px; gap: 3px; justify-content: flex-start; padding-left: 4px; }
.edit .cmds svg { width: 16px; }
.edit .cmds button { padding-left: 1px; }
.caret.far { margin-left: 7px; }
.combo { position: relative; display: block; border: 1px solid #ababab; background: #fff; height: 23px; }
.combo.face { width: 93px; }
.combo.size { width: 63px; border-left-width: 0; }
.combo select { appearance: none; border: 0; background: none; font: inherit; color: #333; width: 100%; height: 21px; padding: 0 20px 0 3px; margin: 0; overflow: hidden; text-overflow: clip; }
.combo svg { position: absolute; right: 3px; top: 8px; }
.b24 { width: 24px; font-size: 15px; font-weight: 600; position: relative; }
.b24.shrink { font-size: 13px; }
.b24 i { align-self: flex-start; margin-top: 4px; border: 2px solid transparent; }
.b24 .up { border-bottom-color: #3f74b0; border-top: 0; }
.b24 .down { border-top-color: #3f74b0; border-bottom: 0; }
.aa { width: 41px; gap: 5px; font-size: 13px; }
.b32 { width: 32px; }
.sep { width: 1px; height: 21px; margin: 1px 4px; background: #d0d0d0; flex: none; }
.sep.tight { margin: 1px 0; }
.sep.first { margin-left: 3px; }
.b { width: 22px; height: 23px; flex: none; font-size: 13px; }
.b.heavy { font-weight: 700; }
.b.slant { font-style: italic; }
.b.small { font-size: 10px; }
.b sub, .b sup { font-size: 8px; line-height: 8px; color: #3f74b0; }
.b sub { align-self: flex-end; margin-bottom: 4px; }
.b sup { align-self: flex-start; margin-top: 3px; }
.b.split { width: 34px; justify-content: flex-start; }
.b.split > :first-child { margin-left: auto; margin-right: auto; }
.b.split .caret { margin: 0 6px 0 0; }
.b.on, .views .on { background: #c6c6c6; }

.gallery { display: flex; height: 60px; background: #fff; border: 1px solid #d0d0d0; border-right: 0; }
.style { flex: 1; min-width: 0; flex-direction: column; justify-content: flex-start; padding-top: 5px; height: 56px; margin-top: 1px; }
.style.selected { border: 4px solid #c6c6c6; padding-top: 1px; }
.sample { display: flex; align-items: center; width: 58px; height: 32px; overflow: hidden; font-family: "Liberation Serif", serif; font-size: 16px; line-height: 32px; color: #000; }
.sname { color: #595959; line-height: 16px; }
.sample.huge { font-size: 34px; line-height: 24px; height: 24px; margin-bottom: 8px; }
.sample.italic { font-style: italic; }
.sample.heavy { font-weight: 700; }
.sample.grey { color: #555; }
.sample.azure { color: #4a82c4; }
.sample.subtitle { font-family: "Noto Sans", sans-serif; font-size: 13px; color: #5a5a5a; }
.sample.caps { font-variant: small-caps; }
.sample.ruled { border-top: 1px solid #4a82c4; border-bottom: 1px solid #4a82c4; height: 21px; margin: 5px 0 6px; line-height: 20px; }
.gscroll { width: 17px; display: flex; flex-direction: column; margin: -1px 0; }
.gscroll button { flex: 1; border: 1px solid #ababab; background: #f3f3f3; }
.gscroll .dim { border-color: #d5d5d5; }
.ribbon-end { flex: none; width: 41px; display: flex; align-items: flex-end; justify-content: flex-end; padding: 0 8px 4px 0; }

.doctabs { display: flex; align-items: flex-end; height: 26px; flex: none; border-bottom: 1px solid #ababab; padding-left: 1px; }
.doctab { display: flex; align-items: center; gap: 6px; height: 24px; padding: 2px 9px 0 6px; border: 1px solid #9a9a9a; border-bottom: 0; border-radius: 5px 5px 0 0; background: #c2d5f2; color: #333; text-decoration: none; white-space: nowrap; }
.doctab b { margin-right: 8px; }
.newtab { width: 30px; height: 22px; margin-left: 2px; background: #fff; border: 1px solid #ababab; border-bottom: 0; border-radius: 5px 5px 0 0; }
.tabctl { display: flex; gap: 2px; margin-left: auto; align-self: center; padding-right: 1px; }
.tabctl button { width: 19px; height: 19px; background: #f0f0f0; border: 1px solid #c8c8c8; }

.workspace { display: flex; flex: 1; min-height: 0; }
.canvas { flex: 1; min-width: 0; display: flex; flex-direction: column; overflow: hidden; }
.rulerrow { display: flex; height: 24px; flex: none; }
.corner { width: 23px; height: 21px; padding: 3px 4px; background: #dcdcdc; }
.corner svg { background: #fff; }
.rulerpages { flex: 1; display: flex; justify-content: center; gap: 17px; }
.nopage { width: 792px; }
.pages { display: flex; justify-content: center; gap: 18px; padding-left: 22px; flex: 1; min-height: 0; overflow: hidden; }
.page { width: 792px; background: #fff; border: 1px solid #c6c6c6; border-width: 0 1px; padding: 0 35px 0 94px; font-family: "Liberation Serif", serif; font-size: 19px; line-height: 32px; color: #000; }
.pnum { text-align: center; height: 47px; padding-top: 14px; line-height: 22px; font-size: 15px; color: #7f7f7f; padding-left: 38px; }
.page p { margin: 0 0 1px; }
.page p > .line { display: block; white-space: nowrap; text-align: justify; text-align-last: justify; }
.page p > .line:first-child { padding-left: 38px; }
.page p.flush > .line:first-child { padding-left: 0; }
.page p > .line:last-child { text-align-last: left; }
.page p.open > .line:last-child { text-align-last: justify; }
h1 { margin: 0; font-size: 19px; line-height: 32px; font-weight: 700; padding-left: 38px; }
.typo { text-decoration: underline wavy #f00 1px; }
.map { width: 623px; height: 393px; margin: 37px 0 7px; font-family: "Noto Sans", sans-serif; }
.page .caption { margin-bottom: 32px; }
.vscroll { width: 16px; display: flex; flex-direction: column; padding: 2px 0; background: #dadada; }
.vscroll button { height: 15px; flex: none; background: #fff; border: 1px solid #ababab; }
.before { flex: 349; }
.after { flex: 411; }
.thumb { height: 34px; background: #fff; border: 1px solid #ababab; }

.status { display: flex; align-items: center; flex: none; height: 23px; border-top: 1px solid #c6c6c6; border-bottom: 1px solid #a9b7bb; background: #f3f3f3; padding: 0 8px; color: #333; }
.pages-count { width: 116px; }
.lang { margin-left: 16px; }
.views { display: flex; margin-left: auto; height: 21px; padding-right: 40px; }
.views button { width: 38px; }
.views { padding-right: 0; }
.zoom { width: 8px; margin: 0 3px; }
.slider { appearance: none; width: 100px; height: 12px; margin: 0 2px; background: linear-gradient(#aaa, #aaa) center / 100% 1px no-repeat; }
.slider::-webkit-slider-thumb { appearance: none; width: 5px; height: 11px; background: #666; }
.percent { width: 37px; text-align: right; }

.taskbar { display: grid; grid-template-columns: 1fr auto 1fr; align-items: center; flex: none; height: 47px; font-size: 12px; background: #cee8ee; color: #1d1d1d; }
.weather { display: flex; align-items: center; gap: 6px; padding-left: 20px; }
.weather .sub { color: #50626a; }
.dock { display: flex; gap: 6px; }
.dock button { position: relative; width: 38px; height: 38px; border-radius: 4px; }
.dock svg[width="30"] { margin: -4px 0 0 4px; }
.dock .current { background: #e5f2f7; box-shadow: 0 0 0 1px #dbe9ee; }
.run::after { content: ""; position: absolute; left: 16px; bottom: 1px; width: 6px; height: 3px; border-radius: 2px; background: #7b8a90; }
.run.current::after { left: 11px; width: 16px; background: #0f77d0; }
.run.faint::after { left: 7px; width: 24px; background: #b9cdd3; }
.tray { display: flex; align-items: center; justify-content: flex-end; padding-right: 21px; gap: 8px; }
.kbd { margin: 0 11px 0 13px; }
.clock { text-align: right; width: 66px; white-space: nowrap; }
</style>
